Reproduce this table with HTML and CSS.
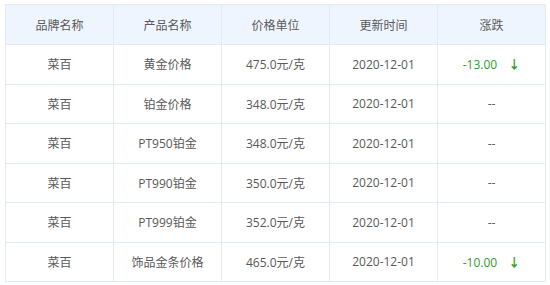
FILE: index.html
```html
<!DOCTYPE html>
<html>
<head>
<meta charset="utf-8">
<link rel="stylesheet" href="styles.css">
</head>
<body>
<table class="price-table">
  <thead>
    <tr><th>品牌名称</th><th>产品名称</th><th>价格单位</th><th>更新时间</th><th>涨跌</th></tr>
  </thead>
  <tbody>
    <tr><td>菜百</td><td>黄金价格</td><td>475.0元/克</td><td>2020-12-01</td><td><span class="down">-13.00<span class="arrow">↓</span></span></td></tr>
    <tr><td>菜百</td><td>铂金价格</td><td>348.0元/克</td><td>2020-12-01</td><td>--</td></tr>
    <tr><td>菜百</td><td>PT950铂金</td><td>348.0元/克</td><td>2020-12-01</td><td>--</td></tr>
    <tr><td>菜百</td><td>PT990铂金</td><td>350.0元/克</td><td>2020-12-01</td><td>--</td></tr>
    <tr><td>菜百</td><td>PT999铂金</td><td>352.0元/克</td><td>2020-12-01</td><td>--</td></tr>
    <tr><td>菜百</td><td>饰品金条价格</td><td>465.0元/克</td><td>2020-12-01</td><td><span class="down">-10.00<span class="arrow">↓</span></span></td></tr>
  </tbody>
</table>
</body>
</html>
```
FILE: styles.css
```css
html, body {
  margin: 0;
  padding: 0;
  background: #fff;
}
body {
  padding: 4px 0 0 5px;
  font-family: "Open Sans", "Noto Sans CJK SC", sans-serif;
  font-size: 12px;
  color: #595959;
}
.price-table {
  border-collapse: collapse;
  width: 541px;
  table-layout: fixed;
}
.price-table th,
.price-table td {
  border: 1px solid #e1ebf8;
  text-align: center;
  padding: 0;
  font-weight: normal;
}
.price-table th {
  background: #eef5fe;
  height: 39px;
}
.price-table td {
  height: 38.5px;
}
.down {
  color: #2e9b2e;
}
.arrow {
  margin-left: 11px;
  font-weight: bold;
}
```
